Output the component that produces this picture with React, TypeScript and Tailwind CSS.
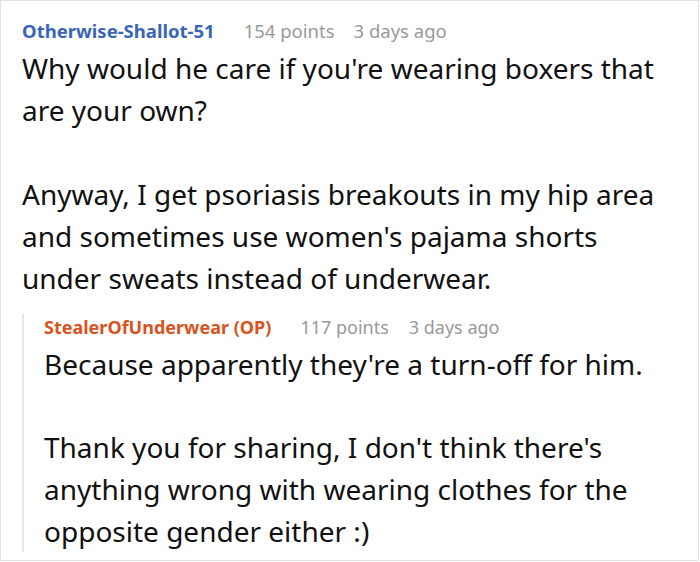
export default function App() {
  return (
    <div className="h-[562px] w-[700px] bg-white font-['Noto_Sans',sans-serif]">
      <div className="h-[561px] w-[699px] overflow-hidden border border-[#e2e2e2] pl-[21px] pt-[17px]">
        <div className="flex items-baseline text-[18.5px] leading-[26px]">
          <span className="mr-[29px] font-bold text-[#3a66b8]">Otherwise-Shallot-51</span>
          <span className="mr-[19px] text-[#999]">154 points</span>
          <span className="text-[#999]">3 days ago</span>
        </div>
        <div className="mt-[3px] text-[28px] leading-[42px] text-[#111]">
          <p className="w-[660px]">Why would he care if you're wearing boxers that are your own?</p>
          <p className="h-[42px]" />
          <p className="w-[660px]">
            Anyway, I get psoriasis breakouts in my hip area and sometimes use women's pajama shorts under sweats instead of underwear.
          </p>
        </div>
        <div className="mt-[15px] flex">
          <div className="w-[2px] self-stretch bg-[#e6e6e6]" />
          <div className="pl-[20px]">
            <div className="flex items-baseline text-[18px] leading-[26px]">
              <span className="mr-[29px] font-bold text-[#d9531e]">StealerOfUnderwear (OP)</span>
              <span className="mr-[20px] text-[#999]">117 points</span>
              <span className="text-[#999]">3 days ago</span>
            </div>
            <div className="mt-[3px] text-[28px] leading-[42px] text-[#111]">
              <p>Because apparently they're a turn-off for him.</p>
              <p className="h-[41px]" />
              <p className="w-[620px]">
                Thank you for sharing, I don't think there's anything wrong with wearing clothes for the opposite gender either :)
              </p>
            </div>
          </div>
        </div>
      </div>
    </div>
  );
}
